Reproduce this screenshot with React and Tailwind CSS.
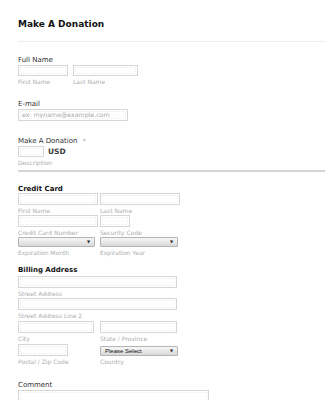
import React from "react";

const font = { fontFamily: '"DejaVu Sans", Verdana, sans-serif' };

function Box({ w, h = "h-[12px]", children }) {
    return (
        <div className={`${w} ${h} border border-[#d6d6d6] bg-white p-px`}>
            <div className="h-full w-full border border-dotted border-[#eeeeee] flex items-center overflow-hidden">
                {children}
            </div>
        </div>
    );
}

function Select({ w, text, className = "" }) {
    return (
        <div className={`${w} h-[10px] border border-[#b4b4b4] rounded-[1px] bg-gradient-to-b from-[#f7f7f7] to-[#d9d9d9] flex items-center justify-between pl-[4px] pr-[4px] ${className}`}>
            <span className="text-[6px] leading-[8px] text-[#111]" style={{ fontFamily: '"Liberation Sans", Arial, sans-serif' }}>{text}</span>
            <span className="text-[4px] leading-[4px] text-[#222]">▼</span>
        </div>
    );
}

function Sub({ children }) {
    return <div className="mt-[2px] text-[6px] leading-[7px] text-[#adadad]">{children}</div>;
}

function Label({ children, className = "" }) {
    return <div className={`text-[7px] leading-[9px] text-[#333] ${className}`}>{children}</div>;
}

function Section({ children, className = "" }) {
    return <div className={`text-[7px] leading-[8px] font-bold text-[#111] ${className}`}>{children}</div>;
}

export default function App() {
    return (
        <div className="w-[325px] h-[400px] overflow-hidden bg-white" style={font}>
            <div className="pl-[18px] pt-[18px] flex flex-col">
                <h1 className="text-[9px] leading-[12px] font-bold text-[#111]">Make A Donation</h1>
                <div className="mt-[11px] h-px bg-[#ececec]" />

                {/* full name */}
                <Label className="mt-[14px]">Full Name</Label>
                <div className="flex">
                    <div className="w-[55px] flex flex-col">
                        <Box w="w-[50px]" h="h-[11px]" />
                        <Sub>First Name</Sub>
                    </div>
                    <div className="flex flex-col">
                        <Box w="w-[65px]" h="h-[11px]" />
                        <Sub>Last Name</Sub>
                    </div>
                </div>

                {/* email */}
                <Label className="mt-[15px]">E-mail</Label>
                <Box w="w-[110px]">
                    <span className="pl-px text-[6.25px] leading-[8px] text-[#a8a8a8] whitespace-nowrap">ex: myname@example.com</span>
                </Box>

                {/* donation */}
                <Label className="mt-[15px]">
                    Make A Donation <span className="ml-[3px] text-[#999] text-[6px]">*</span>
                </Label>
                <div className="flex items-center">
                    <Box w="w-[26px]" h="h-[11px]" />
                    <span className="ml-[4px] text-[7.5px] leading-[9px] font-bold text-[#3a3a3a]">USD</span>
                </div>
                <Sub>Description</Sub>
                <div className="mt-[4px] h-[2px] bg-[#d4d4d4]" />

                {/* credit card */}
                <Section className="mt-[13px]">Credit Card</Section>
                <div className="flex">
                    <div className="w-[82px] flex flex-col">
                        <Box w="w-[80px]" />
                        <Sub>First Name</Sub>
                    </div>
                    <div className="flex flex-col">
                        <Box w="w-[80px]" />
                        <Sub>Last Name</Sub>
                    </div>
                </div>
                <div className="mt-px flex">
                    <div className="w-[82px] flex flex-col">
                        <Box w="w-[80px]" />
                        <Sub>Credit Card Number</Sub>
                    </div>
                    <div className="flex flex-col">
                        <Box w="w-[30px]" />
                        <Sub>Security Code</Sub>
                    </div>
                </div>
                <div className="mt-px flex">
                    <div className="w-[82px] flex flex-col">
                        <Select w="w-[77px]" text="" />
                        <Sub>Expiration Month</Sub>
                    </div>
                    <div className="flex flex-col">
                        <Select w="w-[78px]" text="" />
                        <Sub>Expiration Year</Sub>
                    </div>
                </div>

                {/* billing */}
                <Section className="mt-[10px]">Billing Address</Section>
                <div className="mt-[2px]">
                    <Box w="w-[159px]" />
                    <Sub>Street Address</Sub>
                </div>
                <div className="mt-px">
                    <Box w="w-[159px]" />
                    <Sub>Street Address Line 2</Sub>
                </div>
                <div className="mt-[2px] flex">
                    <div className="w-[82px] flex flex-col">
                        <Box w="w-[76px]" />
                        <Sub>City</Sub>
                    </div>
                    <div className="flex flex-col">
                        <Box w="w-[77px]" />
                        <Sub>State / Province</Sub>
                    </div>
                </div>
                <div className="mt-[2px] flex">
                    <div className="w-[82px] flex flex-col">
                        <Box w="w-[50px]" />
                        <Sub>Postal / Zip Code</Sub>
                    </div>
                    <div className="flex flex-col">
                        <Select w="w-[78px]" text="Please Select" className="mt-[2px]" />
                        <Sub>Country</Sub>
                    </div>
                </div>

                {/* comment */}
                <Label className="mt-[16px]">Comment</Label>
                <Box w="w-[191px]" h="h-[40px]" />
            </div>
        </div>
    );
}
